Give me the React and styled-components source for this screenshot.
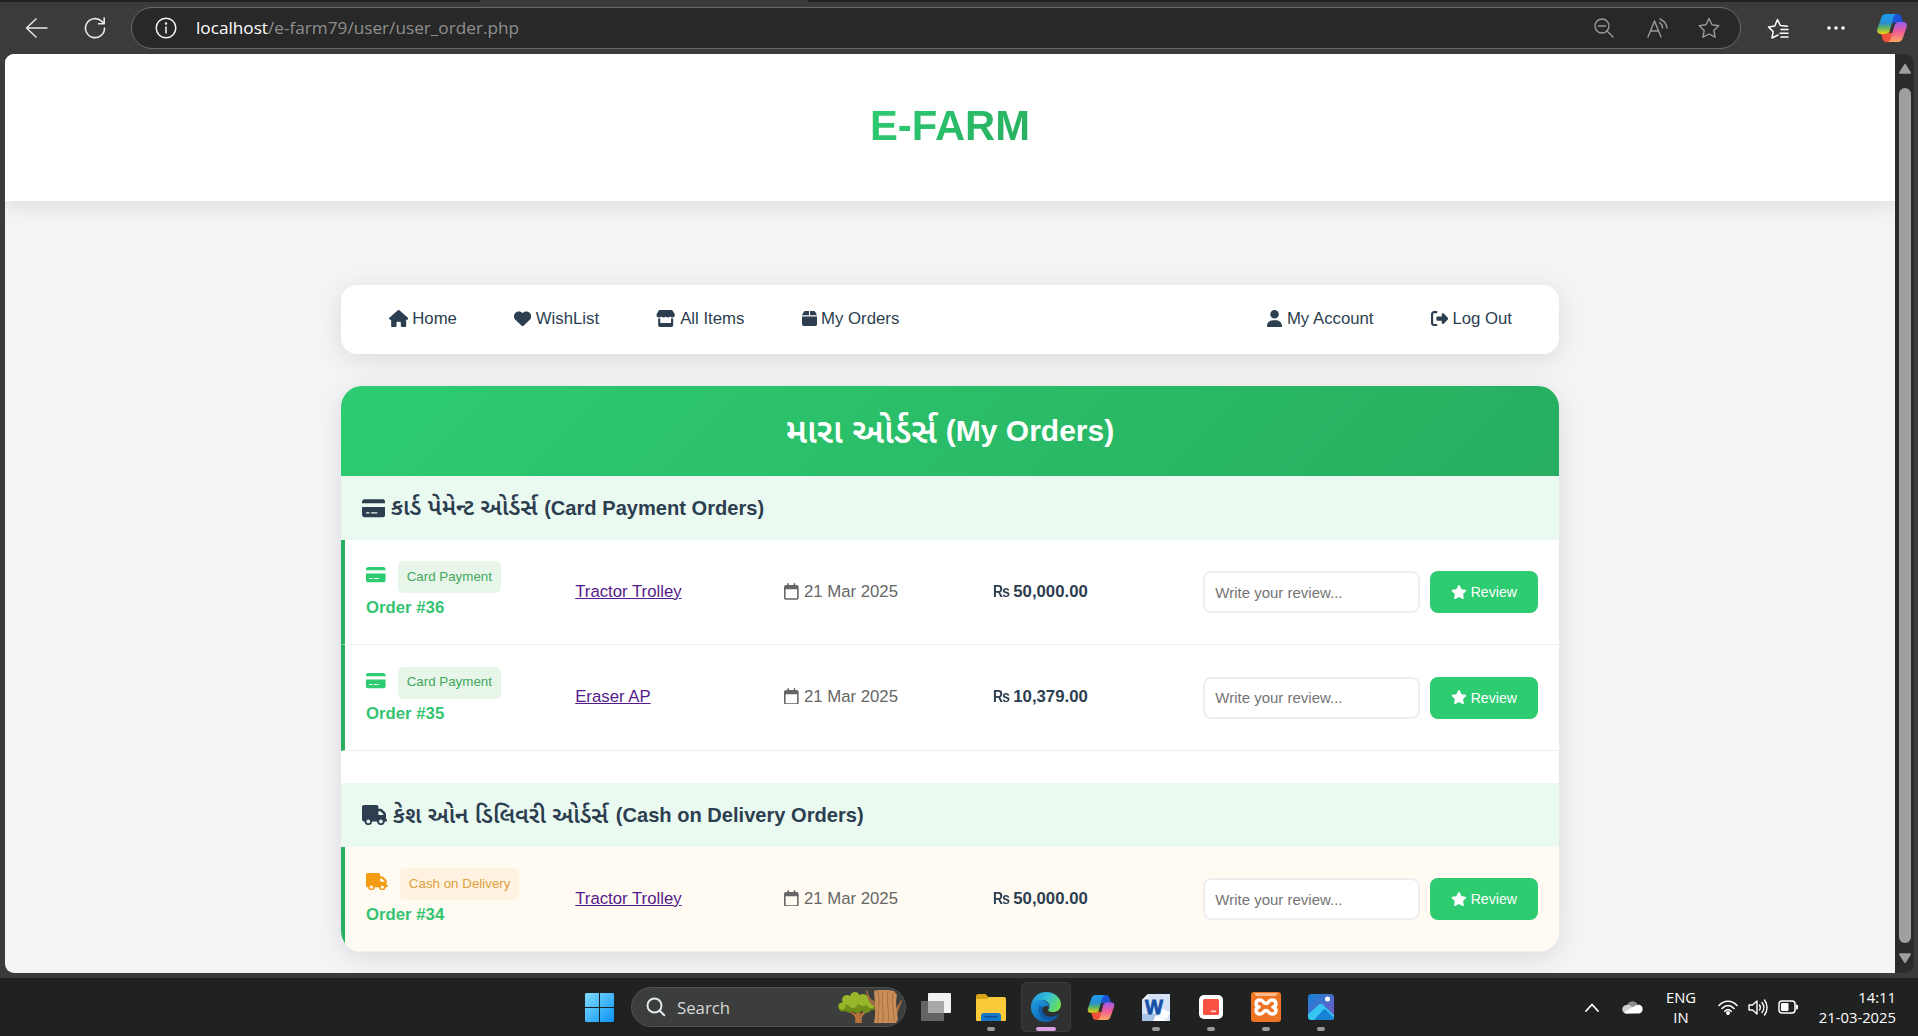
import React from "react";
import styled, { createGlobalStyle } from "styled-components";
import {
  FaHouse, FaHeart, FaStore, FaBox, FaUser, FaRightFromBracket,
  FaCreditCard, FaTruck, FaRegCalendar, FaStar,
} from "react-icons/fa6";

const Global = createGlobalStyle`
  * { box-sizing: border-box; }
  html, body { margin: 0; padding: 0; overflow: hidden; background: #3b3b3b; }
  body { font-family: "Liberation Sans", Arial, "Noto Sans Gujarati", sans-serif; }
`;

const uiFont = `"Open Sans", "Noto Sans", sans-serif`;

const Screen = styled.div`
  width: 1918px;
  height: 1036px;
  display: flex;
  flex-direction: column;
  overflow: hidden;
  background: #3b3b3b;
`;

const TabStrip = styled.div`
  height: 2px;
  flex: none;
  display: flex;
  justify-content: space-between;
`;
const TabShade = styled.div`
  width: ${(p) => p.$w}px;
  background: #202020;
`;

const Toolbar = styled.div`
  height: 52px;
  flex: none;
  display: flex;
  align-items: center;
  padding: 0 9px 0 25px;
`;
const ToolIcon = styled.span`
  width: ${(p) => p.$w}px;
  margin-left: ${(p) => p.$ml || 0}px;
  display: flex;
  flex: none;
  justify-content: center;
  svg { display: block; }
`;
const AddressBar = styled.div`
  width: 1610px;
  height: 42px;
  margin-left: 25px;
  flex: none;
  display: flex;
  align-items: center;
  padding: 0 20px 0 23px;
  border: 1px solid #6a6a6a;
  border-radius: 21px;
  background: #282828;
`;
const Url = styled.span`
  flex: 1;
  margin-left: 19px;
  font: 17.2px/24px ${uiFont};
  color: #8f8f8f;
  white-space: nowrap;
  b { font-weight: 400; color: #fff; }
`;

const Viewport = styled.div`
  height: 919px;
  flex: none;
  display: flex;
  padding: 0 4px 0 5px;
`;
const Page = styled.main`
  width: 1890px;
  height: 919px;
  overflow: hidden;
  display: flex;
  flex-direction: column;
  align-items: center;
  background: #f4f4f7;
  border-radius: 9px 0 0 9px;
`;
const ScrollTrack = styled.div`
  width: 19px;
  display: flex;
  flex-direction: column;
  align-items: center;
  padding: 10px 0 10px;
  background: #2b2b2b;
  border-radius: 0 10px 10px 0;
  svg { display: block; flex: none; }
`;
const ScrollThumb = styled.div`
  width: 12px;
  flex: 1;
  margin: 14px 0 10px;
  border-radius: 6px;
  background: #9f9f9f;
`;

/* Font Awesome glyph: 1em tall, as wide as the glyph's own box */
const Glyph = styled.i`
  width: ${(p) => p.$r}em;
  height: 1em;
  flex: none;
  display: flex;
  font-size: ${(p) => (p.$size ? p.$size + "px" : "inherit")};
  svg { width: 100%; height: 100%; display: block; }
`;

const SiteHeader = styled.header`
  width: 100%;
  height: 147px;
  flex: none;
  display: flex;
  justify-content: center;
  background: #fff;
  box-shadow: 0 4px 22px rgba(0, 0, 0, 0.1);
`;
const Brand = styled.h1`
  margin: 47px 0 0;
  height: 50px;
  font-size: 41.8px;
  line-height: 50px;
  font-weight: 700;
  color: transparent;
  background: linear-gradient(135deg, #2ecc71, #27ae60);
  background-clip: text;
  -webkit-background-clip: text;
`;

const Nav = styled.nav`
  width: 1218px;
  height: 69px;
  flex: none;
  margin-top: 84px;
  display: flex;
  align-items: center;
  gap: 57.3px;
  padding: 0 47px 2px 47.5px;
  border-radius: 16px;
  background: #fff;
  box-shadow: 0 5px 26px rgba(0, 0, 0, 0.1);
`;
const NavLink = styled.a`
  display: flex;
  align-items: center;
  gap: 4.4px;
  margin-left: ${(p) => (p.$push ? "auto" : 0)};
  font-size: 16.75px;
  line-height: 24px;
  color: #2c3e50;
  white-space: nowrap;
`;

const Card = styled.section`
  width: 1218px;
  height: 566px;
  border-radius: 21px;
  overflow: hidden;
  background: #fff;
`;
const CardShadow = styled.div`
  height: 566px;
  flex: none;
  margin-top: 32px;
  border-radius: 21px;
  box-shadow: 0 5px 26px rgba(0, 0, 0, 0.1);
`;
const CardTitle = styled.h2`
  margin: 0;
  height: 90px;
  display: flex;
  align-items: center;
  justify-content: center;
  font-size: 30px;
  font-weight: 700;
  color: #fff;
  background: linear-gradient(135deg, #2ecc71, #27ae60);
`;
const Native = styled.span`
  display: inline-block;
  width: ${(p) => p.$w}px;
  font-size: ${(p) => p.$size}px;
  font-weight: 600;
  line-height: 1;
  white-space: nowrap;
`;
const SectionTitle = styled.h3`
  margin: ${(p) => p.$top || 0}px 0 0;
  height: 64px;
  display: flex;
  align-items: center;
  gap: 5.5px;
  padding-left: 21px;
  font-size: 20.1px;
  font-weight: 700;
  color: #2c3e50;
  background: #eafaf1;
  white-space: nowrap;
`;
const Row = styled.div`
  height: ${(p) => p.$h}px;
  display: grid;
  grid-template-columns: repeat(4, 188px) 1fr;
  column-gap: 21.2px;
  align-items: center;
  padding: 0 21px;
  border-left: 4px solid #27ae60;
  border-bottom: 1px solid #eee;
  background: ${(p) => (p.$cod ? "#fffaf2" : "#fff")};
  font-size: 16.75px;
`;
const OrderCell = styled.div`
  height: 62px;
  display: flex;
  flex-direction: column;
`;
const Method = styled.div`
  display: flex;
  height: 32px;
  gap: 12.5px;
  font-size: 17.4px;
  color: ${(p) => (p.$cod ? "#f39c12" : "#2ecc71")};
  ${Glyph} { margin-top: 5px; }
`;
const Badge = styled.span`
  height: 32px;
  display: flex;
  align-items: center;
  padding: 0 8.6px 1.5px;
  border-radius: 5px;
  font-size: 13.35px;
  white-space: nowrap;
  color: ${(p) => (p.$cod ? "#e0a040" : "#43a862")};
  background: ${(p) => (p.$cod ? "#fff2e0" : "#e8f5e9")};
`;
const OrderNo = styled.strong`
  line-height: 30px;
  color: #34c471;
`;
const Cell = styled.div`
  display: flex;
  align-items: center;
  line-height: 20px;
  padding-bottom: ${(p) => p.$lift}px;
`;
const Product = styled.a`
  color: #551a8b;
  text-decoration: underline;
`;
const OrderDate = styled(Cell)`
  gap: 4.9px;
  color: #666;
  ${Glyph} { margin-bottom: 1px; }
`;
const Price = styled(Cell)`
  gap: 5px;
  margin-left: -1px;
  font-weight: 700;
  color: #2c3e50;
  white-space: nowrap;
`;
const Rupee = styled.span`
  width: 15.7px;
  transform: scaleX(0.83);
  transform-origin: left;
`;
const ReviewForm = styled.form`
  display: flex;
  gap: 10.5px;
  margin: 0;
`;
const ReviewInput = styled.input`
  width: 217px;
  height: 42px;
  padding: 0 10.5px;
  border: 2px solid #eee;
  border-radius: 8px;
  font: 15px "Liberation Sans", Arial, sans-serif;
  outline: none;
  background: #fff;
  &::placeholder { color: #757575; opacity: 1; }
`;
const ReviewButton = styled.button`
  flex: 1;
  height: 42px;
  display: flex;
  align-items: center;
  justify-content: center;
  gap: 3.5px;
  padding: 0;
  border: 0;
  border-radius: 8px;
  background: #2ecc71;
  color: #fff;
  font: 14.1px "Liberation Sans", Arial, sans-serif;
`;

const Taskbar = styled.footer`
  height: 58px;
  margin-top: 5px;
  flex: none;
  display: flex;
  align-items: center;
  padding: 0 22px 0 585px;
  background: #202221;
  color: #fff;
  font-family: ${uiFont};
`;
const SearchBox = styled.div`
  width: 275px;
  height: 40px;
  margin: 0 5px 0 17px;
  flex: none;
  display: flex;
  align-items: center;
  padding: 0 3px 0 14px;
  border: 1px solid #505252;
  border-radius: 20px;
  background: #3c3e3d;
  svg { display: block; flex: none; }
`;
const SearchLabel = styled.span`
  flex: 1;
  margin-left: 11px;
  font-size: 16.8px;
  color: #d8d8d8;
`;
const Apps = styled.div`
  display: flex;
  gap: 5px;
`;
const AppCell = styled.div`
  width: 50px;
  height: 50px;
  display: flex;
  flex-direction: column;
  align-items: center;
  justify-content: space-between;
  border-radius: 6px;
  padding: 9px 0 1px;
  background: ${(p) => (p.$active ? "#2f3130" : "transparent")};
  box-shadow: ${(p) => (p.$active ? "inset 0 0 0 1px #3a3c3b" : "none")};
  svg { display: block; }
`;
const IconBox = styled.span`
  height: 32px;
  display: flex;
  align-items: center;
`;
const Indicator = styled.i`
  width: ${(p) => (p.$active ? 20 : 8)}px;
  height: 4px;
  border-radius: 2px;
  background: ${(p) => (p.$active ? "#d9a0e4" : p.$on ? "#9a9a9a" : "transparent")};
`;
const Tray = styled.div`
  margin-left: auto;
  display: flex;
  align-items: center;
  svg { display: block; flex: none; }
`;
const TwoLines = styled.div`
  width: ${(p) => p.$w}px;
  padding-bottom: 1px;
  text-align: ${(p) => p.$align};
  font-size: 14.8px;
  line-height: 20px;
  white-space: nowrap;
`;
const TrayGap = styled.span`
  width: ${(p) => p.$w}px;
`;

const line = { fill: "none", strokeLinecap: "round", strokeLinejoin: "round" };

const Copilot = ({ w, h, id }) => (
  <svg width={w} height={h} viewBox="0 0 30 28">
    <defs>
      <linearGradient id={id + "a"} x1="0" y1="0" x2="0" y2="1">
        <stop offset="0" stopColor="#1b9df0" /><stop offset=".45" stopColor="#2b8ed0" />
        <stop offset=".7" stopColor="#5fb45c" /><stop offset="1" stopColor="#f2cf12" />
      </linearGradient>
      <linearGradient id={id + "b"} x1="0" y1="0" x2="0" y2="1">
        <stop offset="0" stopColor="#9a5cf0" /><stop offset=".5" stopColor="#ee5c96" />
        <stop offset="1" stopColor="#ffa85a" />
      </linearGradient>
    </defs>
    <path d="M16 0h5c1.500 0 2.600 1 3.200 2.500L26 8h-4.500c-2 0-3.400 1-4 3L15 9z" fill="#1b53d8" />
    <path d="M14 28H9c-1.500 0-2.600-1-3.200-2.500L4 20h4.500c2 0 3.400-1 4-3l2.500 2z" fill="#f0503c" />
    <path d="M9 0h11c-2 0-3 1.500-3.600 3.500L12.500 17c-.6 2-2 3-4 3H4c-3 0-4.500-2-3.700-5L4.200 4C5 1.500 6.500 0 9 0z" fill={`url(#${id}a)`} />
    <path d="M21 28H10c2 0 3-1.500 3.600-3.500L17.500 11c.6-2 2-3 4-3H26c3 0 4.500 2 3.700 5l-3.900 11c-.8 2.500-2.300 4-4.800 4z" fill={`url(#${id}b)`} />
    <path d="M16.500 9h3.300c-1.300.4-2 1.300-2.400 2.500L15 19h-3.300c1-.5 1.600-1.400 2-2.600z" fill="#333" />
  </svg>
);

const EdgeIcon = () => (
  <svg width="30" height="30" viewBox="0 0 30 30">
    <defs>
      <linearGradient id="edgeTop" x1="0" y1=".2" x2="1" y2=".6">
        <stop offset="0" stopColor="#2296dc" /><stop offset=".5" stopColor="#35bfd8" />
        <stop offset="1" stopColor="#6be052" />
      </linearGradient>
      <linearGradient id="edgeLow" x1="0" y1="0" x2="1" y2="1">
        <stop offset="0" stopColor="#1f9de4" /><stop offset="1" stopColor="#0b559f" />
      </linearGradient>
    </defs>
    <path d="M0 14C.8 6 7 0 15 0c9 0 15 6 15 12.500 0 5-4 7.500-8 7.500-3.500 0-5.500-1.300-4.500-2.600C20 14 18 9 12 8 6 7.500 1.500 10 0 14z" fill="url(#edgeTop)" />
    <path d="M0 14C1.500 9.500 6 7 11 8c5 .8 7.500 4.200 7 7.500-1-2-5-2-6.500.5C9.500 20 13 25 19 25c3.600 0 6.500-1.400 8.800-3C25.500 27 20.500 30 15 30 6 30-.5 23 0 14z" fill="url(#edgeLow)" />
    <path d="M8.500 13C6 18 8 25 14 27.500c4 1.500 10-.5 13.800-5.500-3 1.700-6 2.500-9 2C13 23 10 18.500 12 15.500z" fill="#0d4f98" opacity=".65" />
  </svg>
);

const FolderIcon = () => (
  <svg width="30" height="27" viewBox="0 0 30 27">
    <path d="M0 2a2 2 0 0 1 2-2h7.500l3.500 3.500H27V9H0z" fill="#d9a219" />
    <path d="M0 5h11l2.500-2H28a2 2 0 0 1 2 2v21a1 1 0 0 1-1 1H1a1 1 0 0 1-1-1z" fill="#fccb3a" />
    <path d="M5 27v-5a3 3 0 0 1 3-3h14a3 3 0 0 1 3 3v5z" fill="#1577c8" />
    <rect x="8.500" y="22" width="13" height="1.500" rx=".7" fill="#0b4f92" />
  </svg>
);

const WordIcon = () => (
  <svg width="28" height="27" viewBox="0 0 28 27">
    <path d="M6 0h22v27H0V6z" fill="#d3e2f5" />
    <path d="M6 0v6H0z" fill="#f4f8fd" />
    <path d="M0 20h16v7H0z" fill="#a9c3e6" />
    <path d="m19 14 9 4-3 7-9-3z" fill="#fff" />
    <path d="M11 27l3-6 12 6z" fill="#fff" />
    <text x="3" y="20" fontFamily="Liberation Sans" fontWeight="700" fontSize="21" fill="#1450a8" stroke="#1450a8" strokeWidth=".8" textLength="18" lengthAdjust="spacingAndGlyphs">W</text>
  </svg>
);

const RedIcon = () => (
  <svg width="24" height="24" viewBox="0 0 24 24">
    <rect width="24" height="24" rx="5" fill="#fff" />
    <rect x="4" y="4" width="16" height="16" rx="1.500" fill="#fb5142" />
    <rect x="12" y="15.500" width="5" height="1.600" fill="#ffd9d5" />
  </svg>
);

const XamppIcon = () => (
  <svg width="30" height="30" viewBox="0 0 30 30">
    <rect width="30" height="30" rx="3" fill="#ee7424" />
    <path d="M3 1h24l-2 3H5z" fill="#f9b98c" />
    <path d="M9 8c-5 0-5 6-1 7-4 1-4 7 1 7 4 0 3-3.500 6-3.500S17 22 21 22c5 0 5-6 1-7 4-1 4-7-1-7-4 0-3 3.500-6 3.500S13 8 9 8z" {...line} stroke="#fff" strokeWidth="3.500" />
  </svg>
);

const PhotosIcon = () => (
  <svg width="26" height="26" viewBox="0 0 26 26">
    <defs>
      <linearGradient id="photoBg" x1="0" y1="0" x2="1" y2="1">
        <stop offset="0" stopColor="#1583d8" /><stop offset="1" stopColor="#7a57c0" />
      </linearGradient>
      <clipPath id="photoClip"><rect width="26" height="26" rx="3.500" /></clipPath>
    </defs>
    <g clipPath="url(#photoClip)">
      <rect width="26" height="26" fill="url(#photoBg)" />
      <path d="M-3 23 11 10.500c1.200-1 2.500-1 3.700 0L30 25v4H-3z" fill="#35c5f2" />
      <path d="M6 26 15 16c1-1 2-1 3 0l10 10z" fill="#1683d6" />
      <circle cx="19.500" cy="5" r="2.500" fill="#fff" />
    </g>
  </svg>
);

const TaskViewIcon = () => (
  <svg width="30" height="28" viewBox="0 0 30 28">
    <rect x="7" width="23" height="20" rx="1" fill="#f2f2f2" />
    <rect y="8" width="23" height="20" rx="1" fill="#6b6b6b" opacity=".9" />
    <path d="M7 8h16v12H7z" fill="#a8a8a8" />
  </svg>
);

const TreeArt = () => (
  <svg width="64" height="34" viewBox="0 0 64 34">
    <path d="M17 33c1-6 0-8-8-12l1-1 8 4 1-5 2 0 1 5 9-5 1 1c-8 5-9 7-8 13z" fill="#b5713a" />
    <g fill="#6f8f16">
      <circle cx="5" cy="17" r="4.500" /><circle cx="11" cy="17.500" r="5" /><circle cx="19" cy="17" r="6" />
      <circle cx="28" cy="18" r="5" /><circle cx="34" cy="16" r="4" />
    </g>
    <g fill="#98b62a">
      <circle cx="9" cy="10" r="5" /><circle cx="17" cy="7" r="5" /><circle cx="25" cy="10" r="6" />
      <circle cx="15" cy="13" r="5" /><circle cx="33" cy="14" r="4" /><circle cx="4" cy="16" r="3.500" />
    </g>
    <path d="M29 0c2 5 2 9 8 12v5c-6-4-8-8-9-17zM57 20l6-10 1 1-6 16z" fill="#a06a40" />
    <path d="M36 1c5-2 17-1 20 0l3 4c-2 8 0 18 1 24l-2 4H36c2-8 1-22 0-32z" fill="#c88d58" />
    <path d="M40 1c2 10 0 20 0 32M45 3c-2 9 1 20 0 29M50 1c-2 12 2 22 0 32M55 3c-2 9 1 16 1 27" {...line} stroke="#a8713f" strokeWidth="1" />
  </svg>
);

const apps = [
  { key: "view", icon: <TaskViewIcon /> },
  { key: "files", icon: <FolderIcon />, on: true },
  { key: "edge", icon: <EdgeIcon />, active: true },
  { key: "copilot", icon: <Copilot w={28} h={25} id="cb" /> },
  { key: "word", icon: <WordIcon />, on: true },
  { key: "red", icon: <RedIcon />, on: true },
  { key: "xampp", icon: <XamppIcon />, on: true },
  { key: "photos", icon: <PhotosIcon />, on: true },
];

const Order = ({ no, product, price, cod, h, lift = 0 }) => (
  <Row $cod={cod} $h={h}>
    <OrderCell>
      <Method $cod={cod}>
        {cod ? <Glyph $r={1.25}><FaTruck /></Glyph> : <Glyph $r={1.125}><FaCreditCard /></Glyph>}
        <Badge $cod={cod}>{cod ? "Cash on Delivery" : "Card Payment"}</Badge>
      </Method>
      <OrderNo>Order #{no}</OrderNo>
    </OrderCell>
    <Cell $lift={lift}><Product>{product}</Product></Cell>
    <OrderDate $lift={lift}><Glyph $r={0.875}><FaRegCalendar /></Glyph>21 Mar 2025</OrderDate>
    <Price $lift={lift}><Rupee>₨</Rupee>{price}</Price>
    <ReviewForm>
      <ReviewInput placeholder="Write your review..." />
      <ReviewButton type="button"><Glyph $r={1.125}><FaStar /></Glyph>Review</ReviewButton>
    </ReviewForm>
  </Row>
);

export default function App() {
  return (
    <Screen>
      <Global />
      <TabStrip><TabShade $w={480} /><TabShade $w={1110} /></TabStrip>
      <Toolbar>
        <ToolIcon $w={23}>
          <svg width="23" height="20" viewBox="0 0 23 20" {...line} stroke="#e8e8e8" strokeWidth="1.500"><path d="M22 10H1.500M11 1 1.500 10 11 19" /></svg>
        </ToolIcon>
        <ToolIcon $w={22} $ml={36}>
          <svg width="22" height="22" viewBox="0 0 22 22" {...line} stroke="#e8e8e8" strokeWidth="1.600"><path d="M20.500 11A9.500 9.500 0 1 1 17.500 4.200L20 6.500M20.200 1v5.700h-5.700" /></svg>
        </ToolIcon>
        <AddressBar>
          <ToolIcon $w={22}>
            <svg width="22" height="22" viewBox="0 0 22 22" {...line} stroke="#f2f2f2" strokeWidth="1.500"><circle cx="11" cy="11" r="9.800" /><path d="M11 10v6" /><circle cx="11" cy="6.500" r=".5" fill="#f2f2f2" /></svg>
          </ToolIcon>
          <Url><b>localhost</b>/e-farm79/user/user_order.php</Url>
          <ToolIcon $w={20}>
            <svg width="20" height="20" viewBox="0 0 20 20" {...line} stroke="#9a9a9a" strokeWidth="1.400"><circle cx="8" cy="8" r="7" /><path d="M4.500 8h7M13 13l6 6" /></svg>
          </ToolIcon>
          <ToolIcon $w={21} $ml={33}>
            <svg width="21" height="20" viewBox="0 0 21 20" {...line} stroke="#9a9a9a" strokeWidth="1.400"><path d="M1 19 7.500 3 14 19M3.500 13h8M12.500 4.500c2 1.300 3 3.200 3 5.500M13 1c4 1.700 6.500 5 7 9" /></svg>
          </ToolIcon>
          <ToolIcon $w={22} $ml={30}>
            <svg width="22" height="22" viewBox="0 0 22 22" {...line} stroke="#9a9a9a" strokeWidth="1.400"><path d="m11 1.500 3 6.200 6.800 1-5 4.700 1.300 6.800L11 17l-6.100 3.200 1.300-6.800-5-4.700 6.800-1z" /></svg>
          </ToolIcon>
        </AddressBar>
        <ToolIcon $w={22} $ml={26}>
          <svg width="22" height="21" viewBox="0 0 22 21" {...line} stroke="#fff" strokeWidth="1.500"><path d="M11 17l-6 3 1.200-6.400L1.500 9l6.300-1L10.500 1.500 13.300 7.500 20.500 8.200M14 11.500h7M13 15.200h8M14 19h7" /></svg>
        </ToolIcon>
        <ToolIcon $w={18} $ml={38}>
          <svg width="18" height="4" viewBox="0 0 18 4" fill="#fff"><circle cx="2" cy="2" r="1.800" /><circle cx="9" cy="2" r="1.800" /><circle cx="16" cy="2" r="1.800" /></svg>
        </ToolIcon>
        <ToolIcon $w={30} $ml={32}><Copilot w={30} h={28} id="ca" /></ToolIcon>
      </Toolbar>

      <Viewport>
        <Page>
          <SiteHeader><Brand>E-FARM</Brand></SiteHeader>
          <Nav>
            <NavLink><Glyph $r={1.125} $size={17.2}><FaHouse /></Glyph>Home</NavLink>
            <NavLink><Glyph $r={1} $size={17.2}><FaHeart /></Glyph>WishList</NavLink>
            <NavLink><Glyph $r={1.125} $size={17.2}><FaStore /></Glyph>All Items</NavLink>
            <NavLink><Glyph $r={0.875} $size={17.2}><FaBox /></Glyph>My Orders</NavLink>
            <NavLink $push><Glyph $r={0.875} $size={17.2}><FaUser /></Glyph>My Account</NavLink>
            <NavLink><Glyph $r={1} $size={17.2}><FaRightFromBracket /></Glyph>Log Out</NavLink>
          </Nav>
          <CardShadow>
            <Card>
              <CardTitle><Native $w={160} $size={34.6}>મારા ઓર્ડર્સ</Native>(My Orders)</CardTitle>
              <SectionTitle>
                <Glyph $r={1.125} $size={20.6}><FaCreditCard /></Glyph>
                <Native $w={148} $size={23.3}>કાર્ડ પેમેન્ટ ઓર્ડર્સ</Native>(Card Payment Orders)
              </SectionTitle>
              <Order no="36" product="Tractor Trolley" price="50,000.00" h={105} />
              <Order no="35" product="Eraser AP" price="10,379.00" h={106} lift={2} />
              <SectionTitle $top={32}>
                <Glyph $r={1.25} $size={20.2}><FaTruck /></Glyph>
                <Native $w={217.5} $size={22.9}>કેશ ઓન ડિલિવરી ઓર્ડર્સ</Native>(Cash on Delivery Orders)
              </SectionTitle>
              <Order no="34" product="Tractor Trolley" price="50,000.00" h={105} lift={1} cod />
            </Card>
          </CardShadow>
        </Page>
        <ScrollTrack>
          <svg width="12" height="10" viewBox="0 0 12 10" fill="#9f9f9f"><path d="M5 .7a1.200 1.200 0 0 1 2 0l4.800 7.500c.4.800 0 1.500-.8 1.500H1C.2 9.700-.2 9 .2 8.200z" /></svg>
          <ScrollThumb />
          <svg width="12" height="10" viewBox="0 0 12 10" fill="#9f9f9f"><path d="M5 9.300a1.200 1.200 0 0 0 2 0l4.800-7.500C12.200 1 11.800.3 11 .3H1C.2.3-.2 1 .2 1.800z" /></svg>
        </ScrollTrack>
      </Viewport>

      <Taskbar>
        <svg width="29" height="29" viewBox="0 0 29 29">
          <defs>
            <linearGradient id="win" x1="0" y1="0" x2="1" y2="1"><stop offset="0" stopColor="#80dcff" /><stop offset="1" stopColor="#0a93f5" /></linearGradient>
          </defs>
          <path d="M1 0h13v14H0V1zM15 0h13l1 1v13H15zM0 15h14v14H1l-1-1zM15 15h14v13l-1 1H15z" fill="url(#win)" />
        </svg>
        <SearchBox>
          <svg width="20" height="20" viewBox="0 0 20 20" {...line} stroke="#e0e6ea" strokeWidth="2"><circle cx="8.500" cy="8.500" r="7" /><path d="m13.800 13.800 4.500 4.500" /></svg>
          <SearchLabel>Search</SearchLabel>
          <TreeArt />
        </SearchBox>
        <Apps>
          {apps.map((a) => (
            <AppCell key={a.key} $active={a.active}>
              <IconBox>{a.icon}</IconBox>
              <Indicator $on={a.on} $active={a.active} />
            </AppCell>
          ))}
        </Apps>
        <Tray>
          <svg width="14" height="9" viewBox="0 0 14 9" {...line} stroke="#fff" strokeWidth="1.800"><path d="m1 8 6-6.500L13 8" /></svg>
          <TrayGap $w={23} />
          <svg width="21" height="14" viewBox="0 0 21 14">
            <path d="M5 5a6 6 0 0 1 10.500-1L11 9z" fill="#8d8d8d" />
            <path d="M4.500 13.500a4 4 0 0 1 0-8.500 6 6 0 0 1 4 .5L16 10l-4 3z" fill="#d0d0d0" />
            <path d="M2 12.500 14.500 5a5 5 0 0 1 3-.2 4.500 4.500 0 0 1-.5 8.700H4.500a4 4 0 0 1-2.500-1z" fill="#fff" />
          </svg>
          <TrayGap $w={18} />
          <TwoLines $w={40} $align="center">ENG<br />IN</TwoLines>
          <TrayGap $w={17} />
          <svg width="20" height="15" viewBox="0 0 20 15" {...line} stroke="#fff" strokeWidth="1.600"><path d="M1 5.500C6-.2 14-.2 19 5.500M4 8.500c3.500-4 8.500-4 12 0M6.800 11.300c2-2 4.400-2 6.400 0" /><circle cx="10" cy="13" r="1.200" fill="#fff" /></svg>
          <TrayGap $w={10} />
          <svg width="20" height="17" viewBox="0 0 20 17" {...line} stroke="#fff" strokeWidth="1.400"><path d="M1 6h3.500L9 2v13l-4.500-4H1zM11.500 6c1 1.500 1 3.500 0 5M14 3.500c2.300 3 2.300 7 0 10M16.500 1c3.400 4.500 3.400 10.500 0 15" /></svg>
          <TrayGap $w={10} />
          <svg width="20" height="14" viewBox="0 0 20 14"><rect x="1" y="1" width="16" height="12" rx="3" fill="none" stroke="#fff" strokeWidth="1.500" /><rect x="3" y="3" width="7.500" height="8" rx="1" fill="#fff" /><path d="M18 4.500h.5a1.500 1.500 0 0 1 1.500 1.500v2a1.500 1.500 0 0 1-1.500 1.500H18z" fill="#fff" /></svg>
          <TwoLines $w={98} $align="right">14:11<br />21-03-2025</TwoLines>
        </Tray>
      </Taskbar>
    </Screen>
  );
}
